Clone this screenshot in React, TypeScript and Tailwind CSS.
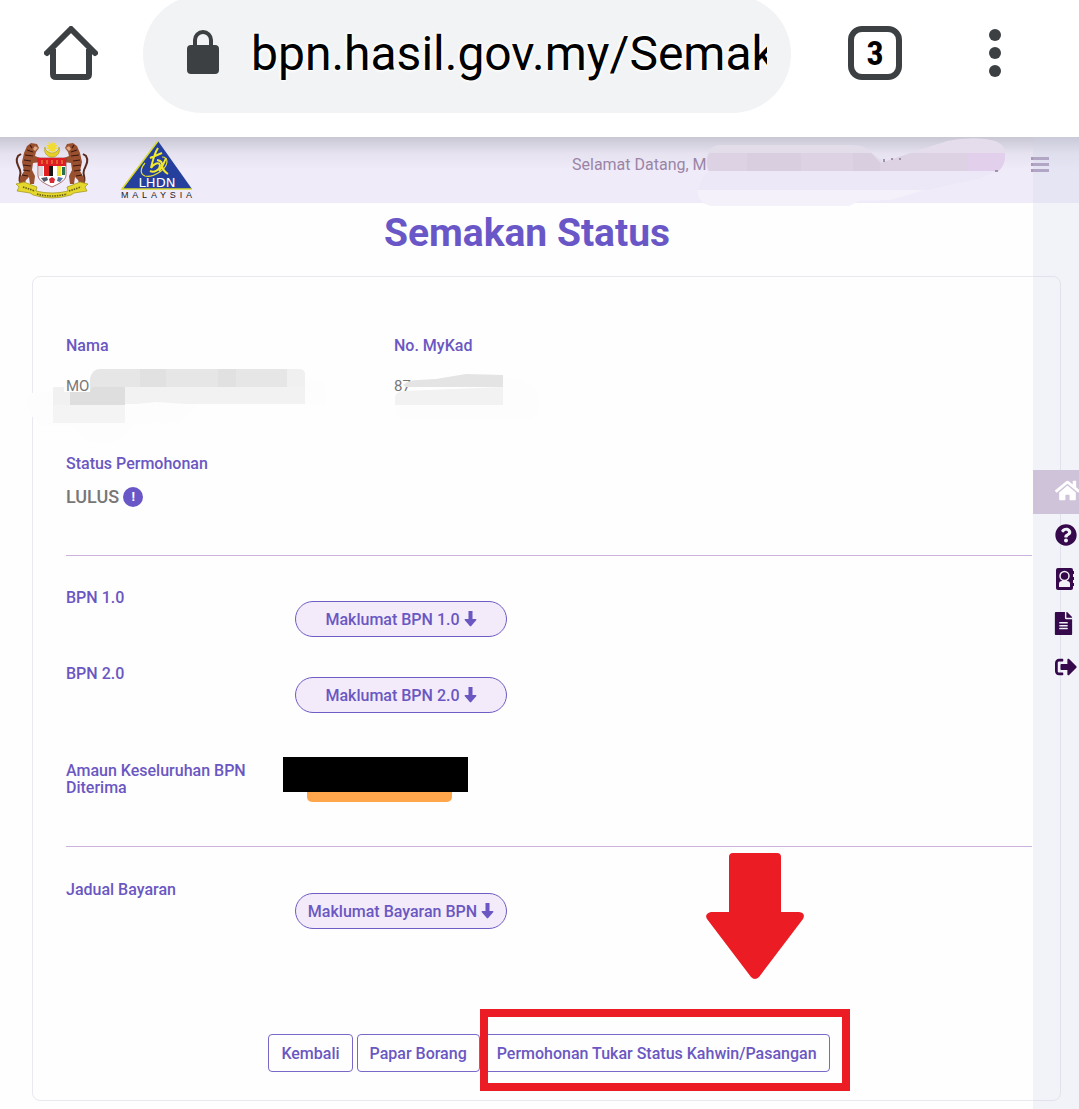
import type { ReactNode } from "react";
import { FaFileAlt, FaHome, FaQuestionCircle, FaSignOutAlt } from "react-icons/fa";

function BrowserBar() {
  return (
    <header className="flex h-[137px] items-start overflow-hidden bg-white pl-11 pr-[78px] text-[#3c4043]">
      <button aria-label="Home" className="mt-[26px]">
        <svg width="54" height="54" viewBox="0 0 54 54" fill="none" stroke="currentColor" strokeWidth="6" strokeLinecap="round" strokeLinejoin="round">
          <path d="M3 27 27 3l24 24" />
          <path d="M9 23v25q0 3 3 3h30q3 0 3-3V23" strokeLinecap="butt" />
        </svg>
      </button>

      <div className="-mt-[5px] ml-[45px] flex h-[118px] min-w-0 flex-1 items-center rounded-full bg-[#f1f3f4] pl-11 pr-6">
        <svg width="32" height="44" viewBox="0 0 32 44" className="mb-1 shrink-0" fill="none">
          <rect x="0" y="15" width="32" height="29" rx="4" fill="currentColor" />
          <path d="M8 17v-7a8 8 0 0 1 16 0v7" stroke="currentColor" strokeWidth="4" />
        </svg>
        <input
          aria-label="Address"
          readOnly
          value="bpn.hasil.gov.my/Semakan"
          className="ml-8 h-16 w-full min-w-0 bg-transparent text-[48px] text-black outline-none [text-shadow:0_0_4px_#fff,0_0_4px_#fff,0_0_3px_#fff,0_0_3px_#fff]"
        />
      </div>

      <button className="ml-[57px] mt-[26px] flex size-[54px] items-center justify-center rounded-[14px] border-6 border-current">
        <span className="font-['Roboto_Condensed','Roboto',sans-serif] text-[34px] font-bold leading-none text-black">3</span>
      </button>

      <button aria-label="Menu" className="ml-[87px] mt-[29px] flex flex-col gap-1.5">
        <span className="size-3 rounded-full bg-current" />
        <span className="size-3 rounded-full bg-current" />
        <span className="size-3 rounded-full bg-current" />
      </button>
    </header>
  );
}

function Tiger() {
  return (
    <>
      <path d="M6 42c-4-4 1-8-1-13s-5-9-2-14l3-2" stroke="#5b2c1e" strokeWidth="2" fill="none" />
      <path d="m12 5 4-3 6 1 2 4-3 4-1 4 5 2 1 4-8 1-1 7 3 6-1 8h-4l-1-7-3 3-2 6H4l1-8 4-7-2-9 2-9z" fill="#99502f" />
      <path d="m12 9 6 2m-8 3 8 1m-9 4 7 1m-8 4 8 1m-8 4 7 1m-8 4 6 1M15 4l2 3" stroke="#3a1811" strokeWidth="1.200" fill="none" />
      <path d="m20 5 3 2-3 3-2-2z" fill="#e0a982" />
    </>
  );
}

function CoatOfArms() {
  return (
    <svg width="74" height="58" viewBox="0 0 74 58" role="img" aria-label="Jata Negara">
      <Tiger />
      <g transform="matrix(-1 0 0 1 74 0)">
        <Tiger />
      </g>
      <path d="M30 6a7.500 7.500 0 1 0 14 0 7 6 0 1 1-14 0" fill="#e5cf28" stroke="#9c8c18" strokeWidth=".5" />
      <path d="m37 0 1 3 3-2-1 3h3l-2 2 2 2h-3l1 3-3-1-1 3-1-3-3 1 1-3h-3l2-2-2-2h3l-1-3 3 2z" fill="#f2db32" />
      <path d="M23 17h28v17c0 6-8 9-14 12-6-3-14-6-14-12z" fill="#fff" stroke="#833" strokeWidth=".7" />
      <path d="M23 17h28v8H23z" fill="#dd1f25" />
      <path d="M27 19v4m5-4v4m5-4v4m5-4v4m5-4v4" stroke="#f08a3a" strokeWidth="1.200" />
      <path d="M29 25h5v10h-5z" fill="#e02020" />
      <path d="M34 25h4v10h-4z" fill="#171717" />
      <path d="M38 25h4v10h-4z" fill="#fff" />
      <path d="M42 25h4v10h-4z" fill="#f2df38" />
      <path d="M24 25h4v10h-4z" fill="#dcd8df" />
      <path d="M47 26h3v8h-3z" fill="#27704b" />
      <path d="m26 37 6-1 1 3-4 2z" fill="#4e5a68" />
      <path d="m34 38 3-2 3 2-1 4h-4z" fill="#d52b32" />
      <path d="m43 36 5 1-3 4-3-1z" fill="#5271a5" />
      <path d="m1 43 8-2 13 5-1 4q16 4 32 0l-1-4 13-5 8 2-3 3 2 4-13 2-3 2q-19 6-38 0l-3-2-13-2 2-4z" fill="#e5d72b" stroke="#9c931b" strokeWidth=".7" />
      <path d="M8 46l12 4M22 53q15 4 30 0M54 50l12-4" stroke="#625d16" strokeWidth="1.600" strokeDasharray="1.500 1" fill="none" />
    </svg>
  );
}

function LhdnLogo() {
  return (
    <svg width="74" height="58" viewBox="0 0 74 58" role="img" aria-label="LHDN Malaysia" className="overflow-visible">
      <path d="M37 0 71 48H1z" fill="#25409c" />
      <path d="M37 0 1 48h70" fill="none" stroke="#d8d92b" strokeWidth="1.500" />
      <path d="M37 7c-4 6-5 12-7 20 3-5 8-6 9-3 0 5-6 8-10 6M29 17l12-5M45 17c-2 5-4 10-7 13M36 19q6 1 5 6 1 5 6 8" stroke="#f2e92d" strokeWidth="2" fill="none" />
      <path d="M24 22c-5 6-5 11 0 13 8 2 21-6 22-14 0-3-2-5-5-5" stroke="#e9e22e" strokeWidth="1.200" fill="none" />
      <text x="36" y="46" textAnchor="middle" fill="#fff" fontSize="13" fontFamily="DejaVu Sans">LHDN</text>
      <text x="0" y="57" fill="#222" fontSize="9" letterSpacing="3.800" fontFamily="Liberation Sans">MALAYSIA</text>
    </svg>
  );
}

function TopBar() {
  return (
    <div className="relative flex h-[66px] items-center bg-[#efebf9] bg-linear-to-b from-[#c9c7d4] via-[#e6e2ef] via-25% to-[#efebf9] to-50% pl-[15px] pr-[30px]">
      <CoatOfArms />
      <div className="ml-8">
        <LhdnLogo />
      </div>
      <div className="ml-auto w-[459px] pb-2.5 text-[16px] leading-5 text-[#9a84a6]">Selamat Datang, MO</div>
      <button aria-label="Toggle menu" className="mb-3 flex w-[18px] flex-col gap-[3px] text-[#a999b8]">
        <span className="h-[3px] bg-current" />
        <span className="h-[3px] bg-current" />
        <span className="h-[3px] bg-current" />
      </button>
      {/* smudged-out user name */}
      <svg width="312" height="70" viewBox="0 0 312 70" className="absolute right-[70px] top-0 z-10">
        <path d="M1 52h229l-36 11-32 1-10 5H14Q0 66 1 52" fill="#f4f1fb" />
        <path d="M12 34h288l-20 8-50 11H1q2-12 11-19" fill="#ece8f7" />
        <path d="M11 16q3-8 12-8h132q13 0 20 8l10 7-2 11H11q-3-9 0-18" fill="#e2dde9" />
        <path d="M183 26 250 4q20-4 38-2 19 2 20 13 1 12-6 19H180z" fill="#e5dcec" />
        <path d="M12 16h162l10 10 30-10h94q1 11-7 18H12q-4-9 0-18" fill="#dcd2e4" />
        <path d="M50 16h54v18H50zM156 16h18l9 10v8h-27z" fill="#d8cee0" />
        <path d="M271 16h37q1 11-7 18h-30z" fill="#e2cfec" />
        <path d="M187 22v3m8-4v2m8-2v2m95 11 3 0" stroke="#8c7a96" strokeWidth="1.500" />
      </svg>
    </div>
  );
}

function ContactBook() {
  return (
    <svg width="20" height="24" viewBox="0 0 20 24">
      <rect x="1" y="1" width="17" height="22" rx="2" fill="currentColor" />
      <path d="M17 4h2v3h-2zm0 6h2v3h-2zm0 6h2v3h-2z" fill="currentColor" />
      <circle cx="9.500" cy="9" r="4.500" fill="none" stroke="#f2f1f8" strokeWidth="1.500" />
      <path d="M4 20v-3q0-3 3-3h5q3 0 3 3v3z" fill="#f2f1f8" />
    </svg>
  );
}

function SideNav() {
  const items: { label: string; icon: ReactNode }[] = [
    { label: "Utama", icon: <FaHome size={25} /> },
    { label: "Soalan", icon: <FaQuestionCircle size={22} /> },
    { label: "Hubungi", icon: <ContactBook /> },
    { label: "Dokumen", icon: <FaFileAlt size={23} className="-ml-[3px]" /> },
    { label: "Keluar", icon: <FaSignOutAlt size={22} /> },
  ];

  return (
    <nav className="absolute inset-y-0 right-0 z-20 w-[46px] overflow-hidden bg-[#cdd2e6]/25 pt-[333px] text-[#35094b]">
      {items.map((item, i) => (
        <a
          key={item.label}
          href="#"
          aria-label={item.label}
          className={i === 0 ? "flex h-11 items-center bg-[#cfc3d9] pb-1 pl-[22px] text-white" : "flex h-11 items-center pb-0.5 pl-[22px]"}
        >
          <span className="shrink-0">{item.icon}</span>
        </a>
      ))}
    </nav>
  );
}

function PillButton({ children }: { children: ReactNode }) {
  return (
    <button className="mt-3 flex h-9 w-[212px] items-center justify-center gap-1 rounded-full border border-[#6f5cc4] bg-[#f3ebf9] font-medium">
      {children}
      <svg width="13" height="16" viewBox="0 0 12 16" fill="currentColor">
        <path d="M4 0h4v8h3q1.500 0 .7 1.200L6.700 15q-.7.800-1.400 0L.3 9.200Q-.5 8 1 8h3z" />
      </svg>
    </button>
  );
}

function OutlineButton({ children }: { children: ReactNode }) {
  return <button className="h-[38px] rounded-[4px] border border-[#7a68c8] px-3 font-medium">{children}</button>;
}

function StatusCard() {
  return (
    <section className="ml-8 mr-[18px] rounded-lg border border-[#e9e9ee] pb-7 pl-[33px] pr-7 pt-[60px] text-[16px] leading-[17px] text-[#6a57c2]">
      <div className="grid grid-cols-[328px_1fr]">
        <div className="relative">
          <h2 className="font-medium">Nama</h2>
          <p className="mt-6 text-[15px] text-[#777]">MO</p>
          <svg width="316" height="82" viewBox="0 0 316 82" className="absolute -left-10 top-6">
            <path d="M0 38q2-7 14-8h50V20h232q6 8 4 24H170l-16 18-44 1q-16 20-34 20t-28-18H14Q2 54 0 38" fill="#fdfdfd" />
            <path d="M64 18q2-10 10-10h199q6 0 6 6v29H160l-30-2-20 2H50V31h14z" fill="#f2f2f2" />
            <path d="M64 18q2-10 10-10h187v18H99v5H64z" fill="#e6e6e6" />
            <path d="M114 8h26v18h-26zm78 0h18v18h-18z" fill="#e1e1e1" />
            <path d="M261 8h12q6 0 6 6v12h-18z" fill="#f0f0f0" />
            <path d="M44 31h20l2-5h33v18H44z" fill="#dedede" />
            <path d="M27 26h11v5h6v13H27z" fill="#f1f1f1" />
            <path d="M27 44h72v18H27z" fill="#f4f4f4" />
          </svg>
        </div>
        <div className="relative">
          <h2 className="font-medium">No. MyKad</h2>
          <p className="mt-6 text-[15px] text-[#777]">87</p>
          <svg width="154" height="56" viewBox="0 0 154 56" className="absolute left-0 top-7">
            <path d="M0 36h108V12q20 1 34 12 8 24-4 30H6q-6-6-6-18" fill="#fdfdfd" />
            <path d="M1 32q1-5 8-6l100-4v18H1z" fill="#f2f2f2" />
            <path d="M9 20q6-5 15-5l18-1 30-5 37 1v12H12z" fill="#e4e4e4" />
          </svg>
        </div>
      </div>

      <h2 className="mt-[60px] font-medium">Status Permohonan</h2>
      <p className="mt-[15px] flex items-center gap-1 text-[18px] font-medium leading-5 text-[#777]">
        LULUS
        <span className="flex size-5 items-center justify-center rounded-full bg-[#6a57c7] text-[13px] font-bold text-white">!</span>
      </p>

      <hr className="mt-12 border-[#cdb2e0]" />

      <div className="mt-[33px] grid grid-cols-[229px_1fr]">
        <h2 className="font-medium">BPN 1.0</h2>
        <PillButton>Maklumat BPN 1.0</PillButton>
      </div>
      <div className="mt-7 grid grid-cols-[229px_1fr]">
        <h2 className="font-medium">BPN 2.0</h2>
        <PillButton>Maklumat BPN 2.0</PillButton>
      </div>
      <div className="mt-11 grid grid-cols-[217px_1fr]">
        <h2 className="w-[200px] pt-[5px] font-medium">Amaun Keseluruhan BPN Diterima</h2>
        <div className="flex w-[185px] flex-col">
          <div className="h-[35px] bg-black" />
          <div className="ml-6 mr-4 h-[10px] rounded-b-[5px] bg-[#ffa64d]" />
        </div>
      </div>

      <hr className="mt-11 border-[#cdb2e0]" />

      <div className="mt-[34px] grid grid-cols-[229px_1fr]">
        <h2 className="font-medium">Jadual Bayaran</h2>
        <PillButton>Maklumat Bayaran BPN</PillButton>
      </div>

      <div className="mt-[105px] flex justify-center gap-1">
        <OutlineButton>Kembali</OutlineButton>
        <OutlineButton>Papar Borang</OutlineButton>
        <div className="relative">
          <OutlineButton>Permohonan Tukar Status Kahwin/Pasangan</OutlineButton>
          <div className="pointer-events-none absolute -bottom-[19px] -left-1 -right-5 -top-[25px] border-8 border-[#ec1c24]" />
          <svg width="98" height="126" viewBox="0 0 98 126" className="absolute bottom-[93px] right-[26px]">
            <path
              d="M27 0h44q4 0 4 4v55h18q7 1 4 7L53 124q-4 4-8 0L1 66q-3-5 4-7h18V4q0-4 4-4"
              fill="#ec1c24"
            />
          </svg>
        </div>
      </div>
    </section>
  );
}

export default function App() {
  return (
    <div className="min-h-screen bg-[#fefefe] font-['Roboto',sans-serif]">
      <BrowserBar />
      <main className="relative overflow-hidden pb-2">
        <TopBar />
        <h1 className="mb-[19px] mt-[6px] pr-[25px] text-center text-[39px] font-bold leading-[48px] text-[#6a57c7]">Semakan Status</h1>
        <StatusCard />
        <SideNav />
      </main>
    </div>
  );
}
